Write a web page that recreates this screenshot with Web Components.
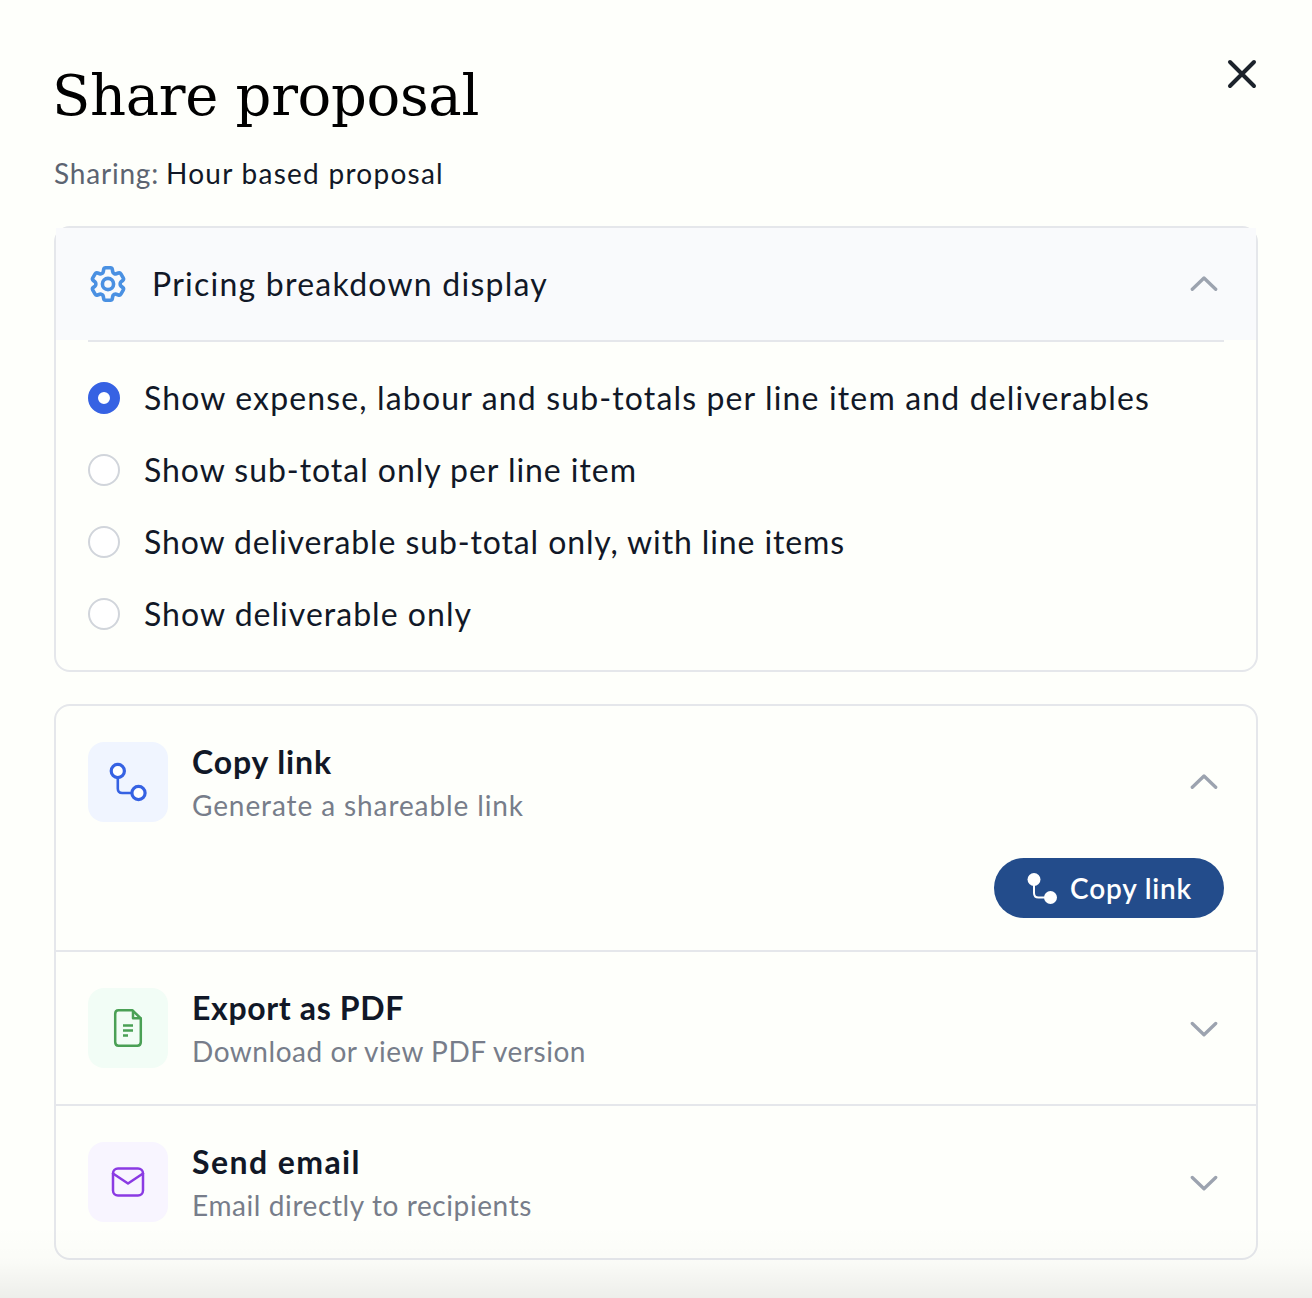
<!DOCTYPE html>
<html lang="en">
<head>
<meta charset="UTF-8">
<title>Share proposal</title>
<style>
  body {
    margin: 0;
    background: #fefffb;
    color: #111827;
    font-family: Lato, "Open Sans", sans-serif;
  }
</style>
</head>
<body>
<share-dialog></share-dialog>

<script>
const ICONS = {
  close: '<path d="M3 3L27 27M27 3L3 27" stroke-width="4"/>',
  up: '<path d="M3.300 13.300L15 2L26.700 13.300" stroke-width="3.300"/>',
  down: '<path d="M3.300 3.500L15 14.800L26.700 3.500" stroke-width="3.300"/>',
  gear: '<path stroke-width="2" d="M9.594 3.94c.09-.542.56-.94 1.11-.94h2.593c.55 0 1.02.398 1.11.94l.213 1.281c.063.374.313.686.645.87.074.04.147.083.22.127.325.196.72.257 1.075.124l1.217-.456a1.125 1.125 0 0 1 1.37.49l1.296 2.247a1.125 1.125 0 0 1-.26 1.431l-1.003.827c-.293.241-.438.613-.43.992a7.723 7.723 0 0 1 0 .255c-.008.378.137.75.43.991l1.004.827c.424.35.534.955.26 1.43l-1.298 2.247a1.125 1.125 0 0 1-1.369.491l-1.217-.456c-.355-.133-.75-.072-1.076.124a6.47 6.47 0 0 1-.22.128c-.331.183-.581.495-.644.869l-.213 1.281c-.09.543-.56.94-1.11.94h-2.594c-.55 0-1.019-.398-1.11-.94l-.213-1.281c-.062-.374-.312-.686-.644-.87a6.52 6.52 0 0 1-.22-.127c-.325-.196-.72-.257-1.076-.124l-1.217.456a1.125 1.125 0 0 1-1.369-.49l-1.297-2.247a1.125 1.125 0 0 1 .26-1.431l1.004-.827c.292-.24.437-.613.43-.991a6.932 6.932 0 0 1 0-.255c.007-.38-.138-.751-.43-.992l-1.004-.827a1.125 1.125 0 0 1-.26-1.43l1.297-2.247a1.125 1.125 0 0 1 1.37-.491l1.216.456c.356.133.751.072 1.076-.124.072-.044.146-.086.22-.128.332-.183.582-.495.644-.869l.214-1.28Z"/><circle cx="12" cy="12" r="3.100" stroke-width="2"/>',
  link: '<path d="M9.8 16V26.5Q9.8 31 14.3 31H24" stroke-width="2.6"/><circle cx="9.8" cy="9" r="6.6" fill="#fff" stroke-width="3.200"/><circle cx="30.5" cy="31" r="6.6" fill="#fff" stroke-width="3.200"/>',
  linkSolid: '<path d="M8 8V22Q8 26.5 12.5 26.5H24" stroke-width="2"/><circle cx="8" cy="8.5" r="6.5" fill="currentColor" stroke="none"/><circle cx="24.5" cy="26.5" r="6.5" fill="currentColor" stroke="none"/>',
  file: '<path d="M10.500 2.300H24.500L32.800 10.500V34Q32.800 37.700 29.300 37.700H10.500Q7.200 37.700 7.200 34V6Q7.200 2.300 10.500 2.300Z" stroke-width="2.500"/><path d="M25 3V10.300H32.500" stroke-width="2.500"/><path d="M15 17.500H25M15 22.500H25M15 27.500H20" stroke-width="2.500" stroke-linecap="butt"/>',
  mail: '<rect x="5" y="6.500" width="30" height="27" rx="5" stroke-width="2.500"/><path d="M5 11.500L20 21.500L35 11.500" stroke-width="2.500"/>'
};

class UiIcon extends HTMLElement {
  constructor() {
    super();
    this.attachShadow({ mode: 'open' });
    const name = this.getAttribute('name');
    const box = this.getAttribute('box') || '0 0 40 40';
    this.shadowRoot.innerHTML = `
      <style>
        :host { display: block; flex: none; width: 40px; height: 40px; }
        svg { display: block; width: 100%; height: 100%; }
      </style>
      <svg viewBox="${box}" fill="none" stroke="currentColor" stroke-linecap="round" stroke-linejoin="round">${ICONS[name]}</svg>
    `;
  }
}

// Single line of text, tracked out to a set measure
class FitText extends HTMLElement {
  constructor() {
    super();
    this.attachShadow({ mode: 'open' });
    this.shadowRoot.innerHTML = `
      <style>
        :host { display: inline-block; white-space: nowrap; }
        span { display: inline-block; }
      </style>
      <span><slot></slot></span>
    `;
  }

  connectedCallback() {
    const target = Number(this.getAttribute('measure'));
    const span = this.shadowRoot.querySelector('span');
    const natural = span.getBoundingClientRect().width;
    const count = this.textContent.length;
    span.style.letterSpacing = `${(target - natural) / count}px`;
  }
}

class RadioOption extends HTMLElement {
  constructor() {
    super();
    this.attachShadow({ mode: 'open' });
    this.shadowRoot.innerHTML = `
      <style>
        :host {
          display: flex;
          align-items: center;
          gap: 24px;
          height: 48px;
          font-size: 32px;
          line-height: 48px;
          cursor: pointer;
        }
        .dot {
          box-sizing: border-box;
          flex: none;
          width: 32px;
          height: 32px;
          border: 2px solid #d1d5db;
          border-radius: 50%;
          background: #fff;
        }
        :host([checked]) .dot { border: 10px solid #3662e3; }
      </style>
      <span class="dot"></span>
      <slot></slot>
    `;
  }
}

class PricingPanel extends HTMLElement {
  constructor() {
    super();
    this.attachShadow({ mode: 'open' });
    this.shadowRoot.innerHTML = `
      <style>
        :host { display: block; border: 2px solid #e5e7eb; border-radius: 16px; }
        header {
          display: flex;
          align-items: center;
          height: 112px;
          padding: 0 32px;
          background: #f9fafc;
          font-size: 32px;
          line-height: 48px;
        }
        .gear { color: #4a90e2; margin-right: 24px; }
        .chevron { width: 30px; height: 17px; margin: 0 5px 0 auto; color: #9ca3af; }
        .options {
          display: flex;
          flex-direction: column;
          gap: 24px;
          margin: 0 32px;
          padding: 32px 0;
          border-top: 2px solid #e5e7eb;
        }
      </style>
      <header>
        <ui-icon class="gear" name="gear" box="0.9 0.9 22.2 22.2"></ui-icon>
        <fit-text measure="396">Pricing breakdown display</fit-text>
        <ui-icon class="chevron" name="up" box="0 0 30 17"></ui-icon>
      </header>
      <div class="options"><slot></slot></div>
    `;
  }
}

class ShareAction extends HTMLElement {
  constructor() {
    super();
    this.attachShadow({ mode: 'open' });
    const icon = this.getAttribute('icon');
    const chevron = this.hasAttribute('open') ? 'up' : 'down';
    this.shadowRoot.innerHTML = `
      <style>
        :host { display: block; }
        header { display: flex; align-items: center; padding: 32px; }
        .tile {
          display: flex;
          align-items: center;
          justify-content: center;
          width: 80px;
          height: 80px;
          margin-right: 24px;
          border-radius: 16px;
          background: var(--tile);
          color: var(--tint);
        }
        .title, .note { display: flex; }
        .title { font-size: 32px; line-height: 48px; font-weight: 700; }
        .note { margin-bottom: 2px; font-size: 28px; line-height: 38px; font-weight: 400; color: #777d8a; }
        .chevron { width: 30px; height: 17px; margin: 0 5px 0 auto; color: #9ca3af; }
        .body { display: flex; justify-content: flex-end; padding: 0 32px 32px; }
        :host(:not([open])) .body { display: none; }
      </style>
      <header>
        <div class="tile"><ui-icon name="${icon}"></ui-icon></div>
        <div>
          <div class="title"><slot name="title"></slot></div>
          <div class="note"><slot name="note"></slot></div>
        </div>
        <ui-icon class="chevron" name="${chevron}" box="0 0 30 17"></ui-icon>
      </header>
      <div class="body"><slot></slot></div>
    `;
  }
}

class PillButton extends HTMLElement {
  constructor() {
    super();
    this.attachShadow({ mode: 'open' });
    this.shadowRoot.innerHTML = `
      <style>
        :host { display: block; }
        button {
          display: flex;
          align-items: center;
          gap: 12px;
          box-sizing: border-box;
          width: 230px;
          height: 60px;
          padding: 0 32px 1px;
          border: 0;
          border-radius: 30px;
          background: #234c8b;
          color: #fff;
          font: 600 28px/40px Lato, "Open Sans", sans-serif;
        }
        ui-icon { width: 32px; height: 34px; }
      </style>
      <button type="button">
        <ui-icon name="linkSolid" box="0 0 32 34"></ui-icon>
        <slot></slot>
      </button>
    `;
  }
}

class ShareDialog extends HTMLElement {
  constructor() {
    super();
    this.attachShadow({ mode: 'open' });
    this.shadowRoot.innerHTML = `
      <style>
        :host {
          display: block;
          position: relative;
          box-sizing: border-box;
          height: 1298px;
          padding: 56px 54px 0;
          overflow: hidden;
        }
        .top { display: flex; justify-content: space-between; align-items: flex-start; }
        h1 {
          height: 80px;
          margin: 0 0 0 -2px;
          color: #000;
          font: 400 56px/79px "DejaVu Serif", serif;
        }
        .close { width: 30px; height: 30px; margin: 3px 1px 0 0; color: #1c232b; }
        .sub {
          display: flex;
          gap: 7px;
          margin: 17px 0 33px;
          font-size: 28px;
          line-height: 40px;
        }
        .sub .label { color: #5c6471; }
        .actions { margin-top: 32px; border: 2px solid #e5e7eb; border-radius: 16px; }
        share-action + share-action { border-top: 2px solid #e5e7eb; }
        /* fade over the bottom edge of the scroll area */
        .fade {
          position: absolute;
          left: 0;
          right: 0;
          bottom: 0;
          height: 72px;
          background: linear-gradient(rgba(0, 0, 0, 0), rgba(0, 0, 0, 0.015) 50%, rgba(0, 0, 0, 0.065));
        }
      </style>
      <div class="top">
        <h1><fit-text measure="427">Share proposal</fit-text></h1>
        <ui-icon class="close" name="close" box="0 0 30 30"></ui-icon>
      </div>
      <div class="sub">
        <fit-text class="label" measure="105">Sharing:</fit-text>
        <fit-text measure="278">Hour based proposal</fit-text>
      </div>

      <pricing-panel>
        <radio-option checked><fit-text measure="1006">Show expense, labour and sub-totals per line item and deliverables</fit-text></radio-option>
        <radio-option><fit-text measure="493">Show sub-total only per line item</fit-text></radio-option>
        <radio-option><fit-text measure="701">Show deliverable sub-total only, with line items</fit-text></radio-option>
        <radio-option><fit-text measure="328">Show deliverable only</fit-text></radio-option>
      </pricing-panel>

      <div class="actions">
        <share-action open icon="link" style="--tile: #f0f5ff; --tint: #3662e3">
          <fit-text slot="title" measure="140">Copy link</fit-text>
          <fit-text slot="note" measure="332">Generate a shareable link</fit-text>
          <pill-button><fit-text measure="122">Copy link</fit-text></pill-button>
        </share-action>
        <share-action icon="file" style="--tile: #f2fdf6; --tint: #4aa055">
          <fit-text slot="title" measure="212">Export as PDF</fit-text>
          <fit-text slot="note" measure="394">Download or view PDF version</fit-text>
        </share-action>
        <share-action icon="mail" style="--tile: #f8f5ff; --tint: #8a3ae3">
          <fit-text slot="title" measure="169">Send email</fit-text>
          <fit-text slot="note" measure="340">Email directly to recipients</fit-text>
        </share-action>
      </div>
      <div class="fade"></div>
    `;
  }
}

customElements.define('ui-icon', UiIcon);
customElements.define('radio-option', RadioOption);
customElements.define('pricing-panel', PricingPanel);
customElements.define('share-action', ShareAction);
customElements.define('pill-button', PillButton);
customElements.define('share-dialog', ShareDialog);
// last, so that text is measured inside finished parents
customElements.define('fit-text', FitText);
</script>
</body>
</html>
